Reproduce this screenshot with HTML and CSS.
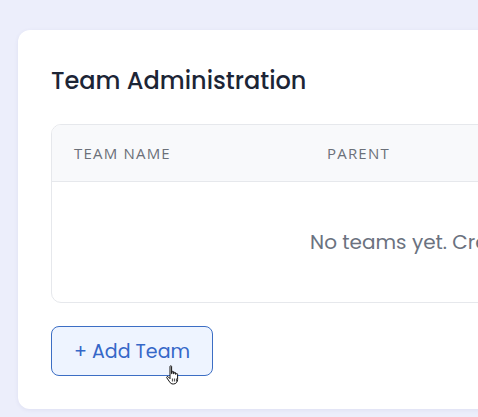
FILE: index.html
```html
<!DOCTYPE html>
<html lang="en">
<head>
    <meta charset="UTF-8">
    <meta name="viewport" content="width=device-width, initial-scale=1.0">
    <title>Team Administration</title>
    <link rel="stylesheet" href="styles.css">
</head>
<body>
    <div class="page">
        <div class="card">
            <h2 class="card-title">Team Administration</h2>
            <div class="table-wrap">
                <table class="teams">
                    <thead>
                        <tr>
                            <th class="col-name">Team Name</th>
                            <th class="col-parent">Parent</th>
                            <th>Members</th>
                            <th>Actions</th>
                        </tr>
                    </thead>
                    <tbody>
                        <tr>
                            <td colspan="4" class="empty">No teams yet. Create your first team.</td>
                        </tr>
                    </tbody>
                </table>
            </div>
            <div class="actions">
                <button class="add-btn">+ Add Team</button>
                <svg class="cursor" width="18" height="24" viewBox="0 0 18 24">
                    <path d="M5 2.5c0-1 1.6-1 1.6 0v7.2l.4-.1V8c0-1 1.6-1 1.6 0v1.8l.4 0V9c0-1 1.6-1 1.6 0v1.3l.4 0c0-1 1.6-1 1.6 0v5.2c0 2.4-1.6 4.5-4.2 4.5H8c-1.6 0-2.6-.9-3.4-2.1L1.8 13.8c-.6-.9.6-1.8 1.4-1l1.8 1.9z" fill="#fff" stroke="#111" stroke-width="1" stroke-linejoin="round"/>
                    <path d="M7.4 14.5v3M9.4 14.5v3M11.4 14.5v3" stroke="#111" stroke-width="0.8"/>
                </svg>
            </div>
        </div>
    </div>
</body>
</html>
```

FILE: styles.css
```css
* {
    box-sizing: border-box;
}
html, body {
    margin: 0;
    height: 100%;
    overflow: hidden;
    background-color: #eceefb;
    font-family: 'Poppins', 'Open Sans', sans-serif;
}
.page {
    padding: 30px 0 0 18px;
}
.card {
    width: 950px;
    background-color: #fff;
    border-radius: 12px;
    padding: 33px;
    box-shadow: 0 1px 4px rgba(60, 70, 140, 0.08);
}
.card-title {
    margin: 0 0 25px 0;
    font-size: 24px;
    font-weight: 500;
    color: #1c2536;
    line-height: 36px;
}
.table-wrap {
    border: 1px solid #e6e8ec;
    border-radius: 10px;
    overflow: hidden;
}
.teams {
    width: 100%;
    border-collapse: collapse;
}
.teams th {
    text-align: left;
    height: 56px;
    padding: 0 22px;
    background-color: #f8f9fb;
    border-bottom: 1px solid #e6e8ec;
    font-family: 'Open Sans', sans-serif;
    font-size: 15px;
    font-weight: 400;
    letter-spacing: 1.2px;
    text-transform: uppercase;
    color: #6b7079;
}
.teams .col-name {
    width: 253px;
}
.teams .col-parent {
    width: 260px;
}
.empty {
    height: 121px;
    text-align: center;
    font-size: 20px;
    color: #6b7280;
}
.actions {
    position: relative;
    margin-top: 23px;
}
.add-btn {
    height: 50px;
    width: 162px;
    border: 1px solid #3c6ec4;
    border-radius: 8px;
    background-color: #eef4ff;
    color: #3567c8;
    font-family: 'Poppins', 'Open Sans', sans-serif;
    font-size: 19px;
    cursor: pointer;
}
.cursor {
    position: absolute;
    left: 114px;
    top: 38px;
}
```
